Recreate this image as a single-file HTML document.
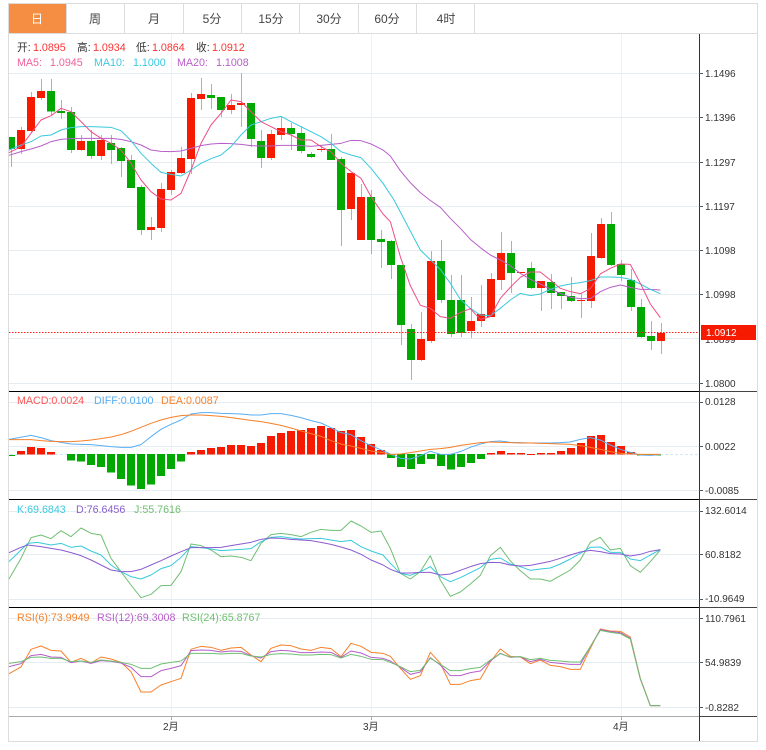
<!DOCTYPE html>
<html><head><meta charset="utf-8"><style>
html,body{margin:0;padding:0;background:#fff;width:766px;height:750px;overflow:hidden}
svg{display:block;position:absolute;left:0;top:0}
text{font-family:"Liberation Sans","Noto Sans CJK SC",sans-serif}
.a text{font-size:10px;fill:#333}
.l text{font-size:10.7px}
.t text{font-size:12px;fill:#444;text-anchor:middle}
.z polyline{fill:none;stroke-width:3;stroke-linejoin:round}
</style></head><body>
<svg width="766" height="750" viewBox="0 0 766 750">
<rect width="766" height="750" fill="#fff"/>
<g shape-rendering="crispEdges">
<path d="M8.5 3.5H757.5V741.5H8.5Z" fill="none" stroke="#dcdcdc"/>
<rect x="9" y="4" width="57" height="29" fill="#f58d42"/>
<path d="M9 33.5H757M66.5 4V33M124.5 4V33M183.5 4V33M241.5 4V33M299.5 4V33M358.5 4V33M416.5 4V33M474.5 4V33" stroke="#dcdcdc" fill="none"/>
<path d="M9 73.5H699M9 117.5H699M9 162.5H699M9 206.5H699M9 250.5H699M9 294.5H699M9 338.5H699M9 383.5H699M9 402.5H699M9 446.5H699M9 490.5H699M9 511.5H699M9 554.5H699M9 599.5H699M9 618.5H699M9 662.5H699M9 707.5H699" stroke="#e6edf2" fill="none"/>
<path d="M171.5 34V716M371.5 34V716M621.5 34V716" stroke="#eef2f5" fill="none"/>
<path d="M10 454.5H699" stroke="#cfeaf2" stroke-dasharray="3 2" fill="none"/>

<!-- wicks -->
<path d="M11.5 137V167M21.5 127V154M51.5 79V115M61.5 100V119M71.5 107V153M91.5 130V159M111.5 135V164M121.5 147V177M131.5 155V188M141.5 185V235M211.5 84V109M221.5 97V117M251.5 103V147M261.5 130V168M291.5 123V150M301.5 126V153M311.5 152V158M331.5 134V160M341.5 157V246M371.5 190V254M381.5 230V268M391.5 240V279M401.5 265V345M411.5 324V380M441.5 240V303M451.5 275V337M461.5 275V337M511.5 241V293M531.5 262V289M551.5 274V309M561.5 292V309M571.5 277V302M611.5 212V266M621.5 260V281M631.5 269V311M641.5 299V338M651.5 321V350" stroke="#82cf82" fill="none"/>
<path d="M31.5 92V132M41.5 79V100M81.5 135V151M101.5 135V160M151.5 217V240M161.5 183V232M171.5 170V195M181.5 147V174M191.5 93V174M201.5 78V110M231.5 94V114M241.5 73V127M271.5 130V160M281.5 117V140M321.5 145V152M351.5 173V220M361.5 184V240M421.5 312V361M431.5 251V343M471.5 297V338M481.5 285V327M491.5 273V317M501.5 232V290M541.5 281V311M581.5 293V318M591.5 233V308M601.5 218V259M661.5 323V354" stroke="#fb9090" fill="none"/>
<!-- green bodies -->
<path d="M9 137h6v12h-6zM47 91h8v20.500h-8zM57 111h8v2h-8zM67 112h8v38h-8zM87 141h8v15h-8zM107 143h8v7h-8zM117 148h8v13h-8zM127 160h8v28h-8zM137 187h8v43h-8zM207 95h8v3h-8zM217 97h8v13h-8zM247 103h8v36h-8zM257 141h8v17h-8zM287 128h8v6h-8zM297 133h8v18h-8zM307 154h8v3h-8zM327 149h8v11h-8zM337 159h8v51h-8zM367 197h8v43h-8zM377 239h8v3h-8zM387 241h8v24h-8zM397 265h8v60h-8zM407 329h8v31h-8zM437 261h8v39h-8zM447 300h8v34h-8zM457 300h8v33h-8zM507 253h8v20h-8zM527 268h8v20h-8zM547 282h8v11h-8zM557 292h8v4h-8zM567 296h8v5h-8zM607 224h8v41h-8zM617 264h8v11h-8zM627 280h8v27h-8zM637 307h8v30h-8zM647 336h8v5h-8z" fill="#00a800"/>
<!-- red bodies -->
<path d="M17 130h8v19h-8zM27 97h8v34h-8zM37 91h8v7h-8zM77 141h8v9h-8zM97 140h8v16h-8zM147 227h8v3h-8zM157 189h8v39h-8zM167 172h8v18h-8zM177 158h8v15h-8zM187 98h8v61h-8zM197 94h8v5h-8zM227 105h8v5h-8zM237 103h8v2h-8zM267 134h8v24h-8zM277 128h8v7h-8zM317 149h8v1h-8zM347 173h8v36h-8zM357 197h8v43h-8zM417 339h8v21h-8zM427 261h8v80h-8zM467 321h8v10h-8zM477 314h8v7h-8zM487 279h8v38h-8zM497 253h8v27h-8zM517 272h8v1h-8zM537 281h8v7h-8zM577 300h8v1h-8zM587 256h8v45h-8zM597 224h8v34h-8zM657 333h8v8h-8z" fill="#f61a00"/>
<!-- macd bars -->
<path d="M9 455h6v1h-6z" fill="#00a800"/>
<path d="M67 454h8v6.500h-8zM77 454h8v7.500h-8zM87 454h8v11h-8zM97 454h8v13h-8zM107 454h8v18.500h-8zM117 454h8v25h-8zM127 454h8v31.500h-8zM137 454h8v35h-8zM147 454h8v30.500h-8zM157 454h8v22h-8zM167 454h8v15h-8zM177 454h8v7.500h-8zM387 454h8v4h-8zM397 454h8v13h-8zM407 454h8v15h-8zM417 454h8v10h-8zM427 454h8v5h-8zM437 454h8v12h-8zM447 454h8v15.500h-8zM457 454h8v13h-8zM467 454h8v9h-8zM477 454h8v5h-8zM637 454.500h24v1h-24z" fill="#00a800"/>
<path d="M17 451h8v3.500h-8zM27 447h8v7.500h-8zM37 448h8v6.500h-8zM47 452h8v2.500h-8zM187 452h8v2.500h-8zM197 450h8v4.500h-8zM207 448h8v6.500h-8zM217 447h8v7.500h-8zM227 445h8v9.500h-8zM237 445h8v9.500h-8zM247 446h8v8.500h-8zM257 443h8v11.500h-8zM267 436h8v18.500h-8zM277 433h8v21.500h-8zM287 431h8v23.500h-8zM297 430h8v24.500h-8zM307 428h8v26.500h-8zM317 426h8v28.500h-8zM327 428h8v26.500h-8zM337 431h8v23.500h-8zM347 430h8v24.500h-8zM357 437h8v17.500h-8zM367 444h8v10.500h-8zM377 450h8v4.500h-8zM487 453h8v1.500h-8zM497 451h8v3.500h-8zM507 453h8v1.500h-8zM517 453h8v1.500h-8zM527 454h8v1h-8zM537 453h8v1.500h-8zM547 453h8v1.500h-8zM557 451h8v3.500h-8zM567 448h8v6.500h-8zM577 443h8v11.500h-8zM587 436h8v18.500h-8zM597 435h8v19.500h-8zM607 442h8v12.500h-8zM617 446h8v8.500h-8zM627 452h8v2.500h-8z" fill="#f61a00"/>

<path d="M9 391.500H699M9 499.500H699M9 607.500H699" stroke="#000" fill="none"/>
<path d="M699 391.500H757M699 499.500H757M699 607.500H757M699 716.500H757" stroke="#444" fill="none"/>
<path d="M9 716.500H699M171.500 716V720M371.500 716V720M621.500 716V720" stroke="#aaa" fill="none"/>
<path d="M699.500 34V741" stroke="#333" fill="none"/>
<path d="M699 73.500h4M699 117.500h4M699 162.500h4M699 206.500h4M699 250.500h4M699 294.500h4M699 383.500h4M699 402.500h4M699 446.500h4M699 490.500h4M699 511.500h4M699 554.500h4M699 599.500h4M699 618.500h4M699 662.500h4M699 707.500h4" stroke="#555" fill="none"/>
<path d="M9 332.500H699" stroke="#f62020" stroke-dasharray="1.500 1.500" fill="none"/>
</g>

<!-- lines in first half: scale zoom coords -->
<g class="z" transform="scale(.33333)">
<polyline stroke="#b65fc9" points="27,466 63,455 93,447 123,438 153,425 183,418 213,416 243,415 273,415 303,415 333,415 363,418 393,425 423,435 453,450 483,454 513,455 543,453 573,445 603,437 633,432 663,430 693,431 723,433 753,437 783,438 813,438 843,436 873,436 903,437 933,439 963,436 993,433 1023,430 1053,421 1083,422 1113,432 1149,450 1171,468 1201,512 1231,548 1261,578 1289,600 1321,622 1351,655 1381,685 1411,718 1441,743 1471,765 1501,780 1531,797 1561,820 1591,838 1621,852 1651,867 1681,880 1711,892 1741,896 1771,896 1801,875 1831,862 1861,855 1891,862 1921,868 1951,868 1981,870"/>
<polyline stroke="#38c9dc" points="27,450 63,435 93,425 123,408 153,405 183,390 213,383 243,380 273,380 303,381 333,382 363,392 393,422 423,460 453,490 483,517 513,523 543,528 573,510 603,490 633,476 663,465 693,440 723,405 753,375 783,365 813,355 843,349 873,365 903,380 933,395 963,410 993,430 1023,455 1053,465 1083,473 1113,505 1149,550 1182,600 1261,750 1321,808 1351,850 1381,898 1411,925 1441,945 1471,947 1501,925 1531,900 1561,880 1591,887 1621,882 1651,868 1681,858 1711,852 1741,848 1771,842 1801,831 1831,831 1861,832 1891,838 1921,852 1951,868 1981,881"/>
<polyline stroke="#ee4d85" points="27,458 63,440 93,400 123,360 153,347 183,325 213,335 243,365 273,395 303,415 333,430 363,450 393,490 423,540 453,575 483,597 513,600 543,580 573,510 603,430 633,375 663,340 693,300 723,305 753,335 783,365 813,380 843,395 873,405 903,420 933,420 963,440 993,455 1023,490 1053,515 1083,535 1113,590 1149,642 1171,665 1201,770 1231,857 1261,916 1291,925 1321,950 1351,955 1381,938 1411,926 1441,958 1471,950 1501,895 1531,862 1561,832 1591,816 1621,816 1651,840 1681,865 1711,875 1741,881 1771,866 1801,822 1831,805 1861,792 1891,793 1921,850 1951,912 1981,953"/>
</g>
<g class="z" transform="translate(0,390) scale(.33333)">
<polyline stroke="#5aaef2" points="27,148 60,142 93,136 123,143 153,152 183,157 213,162 243,163 273,164 303,167 333,170 363,172 393,172 423,164 453,140 483,118 513,103 543,90 573,72 603,68 633,68 663,70 693,71 723,72 753,75 783,75 813,71 843,71 873,76 903,83 933,92 963,99 993,113 1023,128 1053,134 1083,152 1113,167 1149,182 1171,192 1201,205 1231,207 1261,197 1291,184 1321,193 1351,193 1381,185 1411,172 1441,162 1471,155 1501,153 1531,157 1561,158 1591,159 1621,159 1651,159 1681,158 1711,156 1741,148 1771,143 1801,150 1831,165 1861,178 1891,187 1921,195 1951,196 1981,194"/>
<polyline stroke="#f6802a" points="27,149 63,149 93,149 123,152 153,154 183,155 213,155 243,153 273,150 303,146 333,141 363,134 393,124 423,112 453,100 483,90 513,82 543,77 573,75 603,75 633,77 663,79 693,83 723,87 753,91 783,95 813,100 843,106 873,114 903,123 933,131 963,139 993,152 1023,162 1053,168 1083,175 1113,183 1149,188 1171,193 1201,192 1231,188 1261,183 1291,178 1321,176 1351,172 1381,166 1411,162 1441,158 1471,156 1501,157 1531,158 1561,159 1591,159 1621,160 1651,161 1681,162 1711,163 1741,167 1771,172 1801,178 1831,185 1861,190 1891,192 1921,193 1951,193 1981,193"/>
</g>
<g class="z" transform="translate(0,500) scale(.33333)">
<polyline stroke="#6fbf72" points="27,237 63,175 93,113 123,105 153,116 183,92 213,110 243,84 273,100 303,105 333,175 363,215 393,255 423,293 453,283 483,257 513,256 543,215 573,132 603,137 633,150 663,170 693,168 723,172 753,182 783,130 813,104 843,100 873,104 903,110 933,97 963,88 993,91 1023,91 1053,63 1083,78 1113,97 1143,93 1149,104 1171,145 1201,220 1231,237 1261,215 1291,167 1321,240 1351,289 1381,276 1411,252 1441,226 1471,167 1501,142 1531,183 1561,212 1591,237 1621,237 1651,244 1681,227 1711,210 1741,180 1771,127 1801,112 1831,150 1861,145 1891,197 1921,217 1951,185 1981,150"/>
<polyline stroke="#38c9dc" points="27,185 63,150 83,130 112,127 153,135 183,130 213,142 243,138 273,153 303,165 333,195 363,215 393,230 423,237 453,225 483,206 513,197 543,172 573,140 603,143 633,147 663,152 693,150 723,148 753,146 783,125 813,112 843,110 873,114 903,117 933,116 963,115 993,120 1023,125 1053,121 1083,140 1113,153 1149,165 1171,190 1201,220 1231,226 1261,215 1291,200 1321,230 1351,245 1381,233 1411,218 1441,203 1471,178 1501,174 1531,192 1561,200 1591,211 1621,207 1651,204 1681,192 1711,177 1741,160 1771,142 1801,141 1831,157 1861,157 1891,177 1921,182 1951,165 1981,149"/>
<polyline stroke="#8a5bd0" points="27,158 63,142 83,135 123,140 153,145 183,150 213,158 243,167 273,180 303,195 333,210 363,215 393,215 423,208 453,195 483,182 513,168 543,155 573,143 603,143 633,143 663,142 693,137 723,132 753,127 783,118 813,114 843,115 873,118 903,120 933,122 963,127 993,133 1023,141 1053,150 1083,163 1113,180 1149,195 1171,208 1201,219 1231,219 1261,217 1291,217 1321,225 1351,222 1381,211 1411,200 1441,191 1471,187 1501,188 1531,195 1561,198 1591,196 1621,190 1651,184 1681,175 1711,165 1741,156 1771,151 1801,155 1831,161 1861,162 1891,168 1921,163 1951,154 1981,149"/>
</g>
<g class="z" transform="translate(0,605) scale(.33333)">
<polyline stroke="#f6802a" points="27,206 63,186 93,133 123,123 153,136 183,138 213,172 243,160 273,174 303,156 333,162 363,172 393,200 423,261 453,261 483,240 513,230 543,220 573,133 603,124 633,127 663,136 693,129 723,127 753,150 783,170 813,130 843,120 873,122 903,132 933,136 963,127 993,131 1023,155 1053,115 1083,124 1113,142 1149,145 1171,154 1201,190 1231,223 1261,212 1291,142 1321,175 1351,238 1381,238 1411,227 1441,222 1471,170 1501,132 1531,154 1561,156 1591,176 1621,165 1651,181 1681,185 1711,193 1741,193 1771,130 1801,72 1831,78 1861,79 1891,96 1921,220 1951,302 1981,302"/>
<polyline stroke="#b65fc9" points="27,185 63,176 93,152 123,148 153,156 183,157 213,173 243,168 273,175 303,167 333,169 363,174 393,187 423,215 453,215 483,197 513,190 543,182 573,137 603,135 633,136 663,141 693,138 723,139 753,152 783,159 813,140 843,136 873,138 903,143 933,143 963,141 993,142 1023,157 1053,138 1083,144 1113,157 1149,160 1171,168 1201,187 1231,208 1261,201 1291,158 1321,180 1351,212 1381,212 1411,203 1441,198 1471,168 1501,145 1531,157 1561,155 1591,170 1621,163 1651,172 1681,175 1711,178 1741,178 1771,125 1801,74 1831,80 1861,83 1891,100 1921,222 1951,302 1981,302"/>
<polyline stroke="#6fbf72" points="27,175 63,170 93,157 123,156 153,160 183,160 213,170 243,168 273,172 303,165 333,168 363,172 393,178 423,190 453,190 483,177 513,172 543,168 573,145 603,145 633,145 663,147 693,145 723,145 753,153 783,156 813,148 843,146 873,147 903,150 933,150 963,148 993,149 1023,159 1053,148 1083,154 1113,163 1149,164 1171,172 1201,185 1231,200 1261,196 1291,160 1321,178 1351,197 1381,197 1411,191 1441,187 1471,165 1501,146 1531,156 1561,155 1591,164 1621,160 1651,166 1681,168 1711,171 1741,171 1771,125 1801,76 1831,82 1861,86 1891,102 1921,222 1951,302 1981,302"/>
</g>

<g class="t">
<text x="37" y="23" style="fill:#fff">日</text>
<text x="95" y="23">周</text><text x="154" y="23">月</text><text x="212" y="23">5分</text><text x="271" y="23">15分</text><text x="329" y="23">30分</text><text x="387" y="23">60分</text><text x="446" y="23">4时</text>
</g>
<g class="l">
<text x="17" y="51" fill="#333">开:</text><text x="33" y="51" fill="#f33">1.0895</text>
<text x="77" y="51" fill="#333">高:</text><text x="93" y="51" fill="#f33">1.0934</text>
<text x="136" y="51" fill="#333">低:</text><text x="152" y="51" fill="#f33">1.0864</text>
<text x="196" y="51" fill="#333">收:</text><text x="212" y="51" fill="#f33">1.0912</text>
<text x="17" y="66" fill="#f0609a">MA5:</text><text x="50" y="66" fill="#f0609a">1.0945</text>
<text x="94" y="66" fill="#3cc9e0">MA10:</text><text x="133" y="66" fill="#3cc9e0">1.1000</text>
<text x="177" y="66" fill="#b860c8">MA20:</text><text x="216" y="66" fill="#b860c8">1.1008</text>
<text x="17" y="404" fill="#f55">MACD:0.0024</text><text x="94" y="404" fill="#5aaef2">DIFF:0.0100</text><text x="161" y="404" fill="#f6822b">DEA:0.0087</text>
<text x="17" y="513" fill="#3cc9e0">K:69.6843</text><text x="76" y="513" fill="#8a5fd0">D:76.6456</text><text x="134" y="513" fill="#70c070">J:55.7616</text>
<text x="17" y="621" fill="#f6822b">RSI(6):73.9949</text><text x="97" y="621" fill="#b860c8">RSI(12):69.3008</text><text x="182" y="621" fill="#70c070">RSI(24):65.8767</text>
</g>
<g class="a">
<text x="705" y="77">1.1496</text><text x="705" y="121">1.1396</text><text x="705" y="166">1.1297</text><text x="705" y="210">1.1197</text><text x="705" y="254">1.1098</text><text x="705" y="298">1.0998</text><text x="705" y="343">1.0899</text><text x="705" y="387">1.0800</text>
<text x="705" y="405">0.0128</text><text x="705" y="450">0.0022</text><text x="705" y="494">-0.0085</text>
<text x="705" y="514">132.6014</text><text x="705" y="558">60.8182</text><text x="705" y="602">-10.9649</text>
<text x="705" y="622">110.7961</text><text x="705" y="666">54.9839</text><text x="705" y="711">-0.8282</text>
<text x="163" y="730">2月</text><text x="363" y="730">3月</text><text x="613" y="730">4月</text>
</g>
<rect x="701" y="325" width="55" height="15" fill="#f61a00" shape-rendering="crispEdges"/>
<text x="706" y="336" font-size="10" fill="#fff">1.0912</text>
</svg>
</body></html>
